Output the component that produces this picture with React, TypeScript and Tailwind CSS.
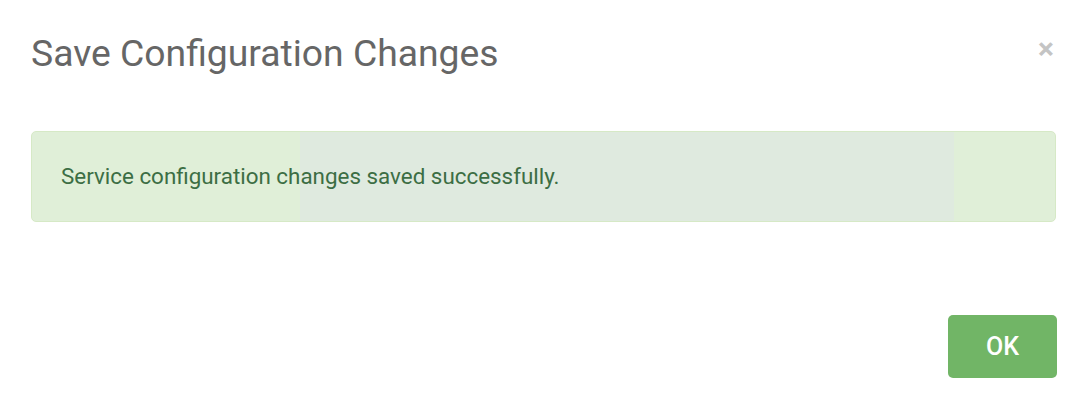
import React from "react";

export default function App() {
  return (
    <div className="w-[1084px] h-[412px] bg-white overflow-hidden font-['Roboto',sans-serif]">
      <div className="flex items-start justify-between pl-[31px] pr-[28px] pt-[32px]">
        <h1 className="text-[37.3px] leading-[42px] font-normal text-[#666666]">Save Configuration Changes</h1>
        <button className="text-[30px] leading-[22px] font-bold text-[#c4c4c4] mt-[6px] mr-[2px]">×</button>
      </div>
      <div className="ml-[31px] mr-[28px] mt-[57px] rounded-[5px] border border-[#d6e9c6] bg-[linear-gradient(to_right,#e0efd8_0px,#e0efd8_268px,#dfeadf_268px,#dfeadf_922px,#e0efd8_922px)] pl-[29px] pt-[29px] pb-[30px]">
        <p className="text-[22.4px] leading-[30px] text-[#3c6e44]">Service configuration changes saved successfully.</p>
      </div>
      <div className="flex justify-end pr-[27px] mt-[93px]">
        <button className="w-[109px] h-[63px] rounded-[5px] bg-[#71b566] text-white text-[25px] font-medium flex items-center justify-center">OK</button>
      </div>
    </div>
  );
}
